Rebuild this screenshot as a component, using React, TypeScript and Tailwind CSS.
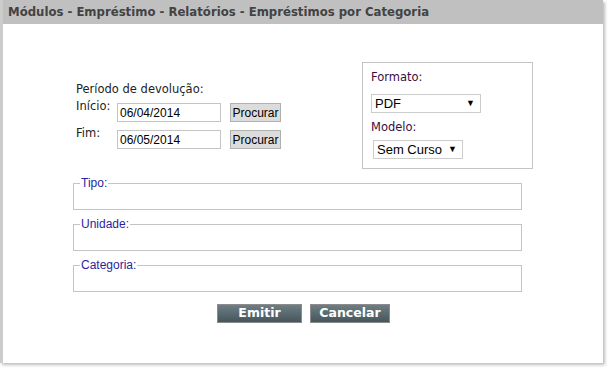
export default function App() {
  return (
    <div className="w-[608px] h-[368px] bg-white">
      <div className="w-[603px] h-[363px] bg-white border-l-[3px] border-[#cccccc] shadow-[2px_2px_3px_#bdbdbd] flex flex-col">
        <div className="h-[24px] bg-[#c0c0c0] pl-[5px] flex items-center font-['DejaVu_Sans_Condensed','DejaVu_Sans',sans-serif] font-bold text-[13px] text-[#434343]">
          Módulos - Empréstimo - Relatórios - Empréstimos por Categoria
        </div>

        <div className="pl-[70px] pt-[38px] flex flex-col">
          <div className="flex">
            <div className="w-[289px] pt-[21px] pl-[3px] font-['DejaVu_Sans',sans-serif] text-[11.5px] text-[#222]">
              <div className="leading-[13px]">Período de devolução:</div>
              <div className="flex items-start mt-[7px]">
                <span className="w-[41px] leading-[13px] mt-[-3px]">Início:</span>
                <input
                  readOnly
                  value="06/04/2014"
                  className="w-[104px] h-[19px] border border-[#c4c4c4] px-[2px] font-['Liberation_Sans',sans-serif] text-[12px] text-black outline-none"
                />
                <button className="ml-[9px] w-[51px] h-[19px] bg-[#dcdcdc] border border-[#b0b0b0] font-['Liberation_Sans',sans-serif] text-[12px] text-black leading-none">
                  Procurar
                </button>
              </div>
              <div className="flex items-start mt-[8px]">
                <span className="w-[41px] leading-[13px] mt-[-3px]">Fim:</span>
                <input
                  readOnly
                  value="06/05/2014"
                  className="w-[104px] h-[19px] border border-[#c4c4c4] px-[2px] font-['Liberation_Sans',sans-serif] text-[12px] text-black outline-none"
                />
                <button className="ml-[9px] w-[51px] h-[19px] bg-[#dcdcdc] border border-[#b0b0b0] font-['Liberation_Sans',sans-serif] text-[12px] text-black leading-none">
                  Procurar
                </button>
              </div>
            </div>

            <div className="w-[171px] h-[107px] border border-[#c4c4c4] pl-[8px] pt-[8px] font-['DejaVu_Sans',sans-serif] text-[11.5px] text-[#3a0f3f]">
              <div className="leading-[13px]">Formato:</div>
              <div className="mt-[10px] w-[110px] h-[19px] border border-[#cccccc] flex items-center justify-between pl-[3px] pr-[5px] font-['Liberation_Sans',sans-serif] text-[13px] text-black">
                <span>PDF</span>
                <span className="text-[9px]">▼</span>
              </div>
              <div className="mt-[8px] leading-[13px]">Modelo:</div>
              <div className="mt-[6px] ml-[2px] w-[90px] h-[19px] border border-[#cccccc] flex items-center justify-between pl-[3px] pr-[5px] font-['Liberation_Sans',sans-serif] text-[13px] text-black">
                <span>Sem Curso</span>
                <span className="text-[9px]">▼</span>
              </div>
            </div>
          </div>

          <div className="flex flex-col gap-[7px] mt-[7px] font-['Liberation_Sans',sans-serif] text-[12px] text-[#2a1fa0]">
            {["Tipo:", "Unidade:", "Categoria:"].map((t) => (
              <fieldset key={t} className="w-[449px] h-[34px] border border-[#c4c4c4] px-[6px]">
                <legend className="px-[1px] leading-[14px]">{t}</legend>
              </fieldset>
            ))}
          </div>

          <div className="w-[449px] flex justify-center gap-[8px] mt-[12px] translate-x-[6px]">
            <button className="w-[85px] h-[19px] border border-[#8c8c8c] bg-gradient-to-b from-[#6d7e84] to-[#46565c] text-white font-['DejaVu_Sans',sans-serif] font-bold text-[12.5px] leading-none">
              Emitir
            </button>
            <button className="w-[80px] h-[19px] border border-[#8c8c8c] bg-gradient-to-b from-[#6d7e84] to-[#46565c] text-white font-['DejaVu_Sans',sans-serif] font-bold text-[12.5px] leading-none">
              Cancelar
            </button>
          </div>
        </div>
      </div>
    </div>
  );
}
